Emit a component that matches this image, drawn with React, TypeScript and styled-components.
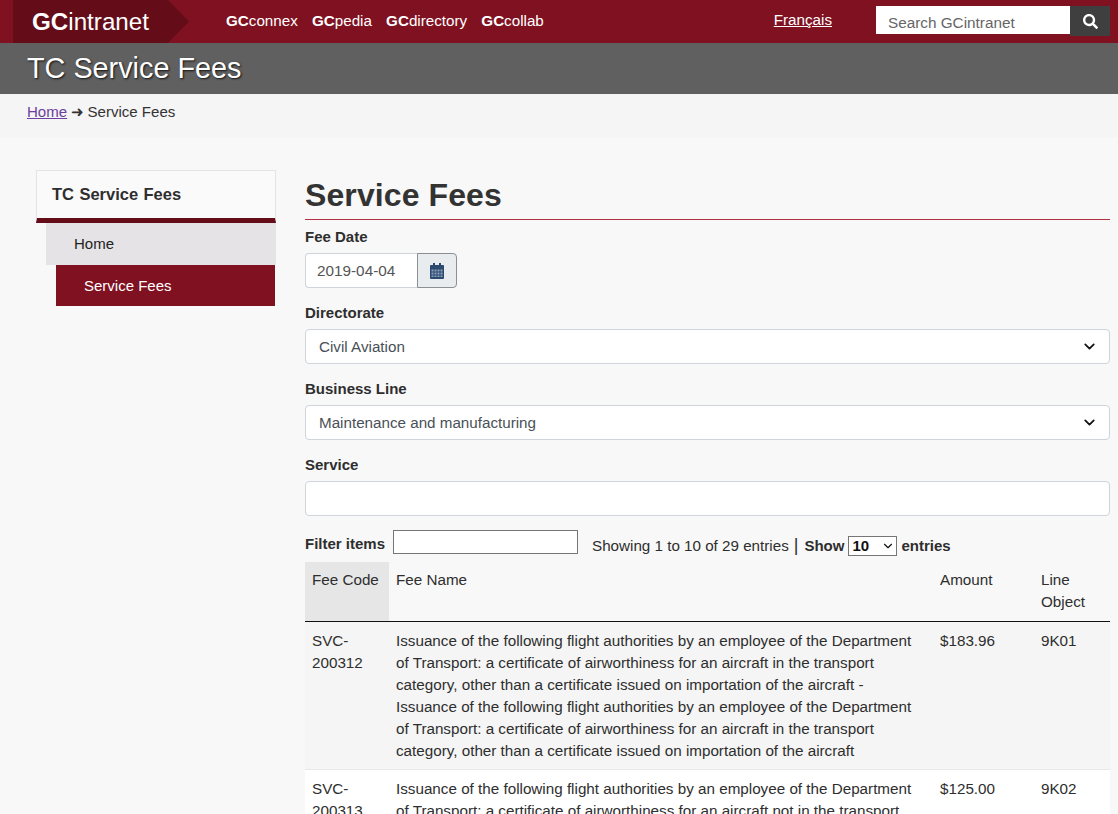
import React from "react";
import styled, { createGlobalStyle } from "styled-components";
import { ChevronDown } from "lucide-react";
import { FaSearch } from "react-icons/fa";

const Global = createGlobalStyle`
  html, body { margin: 0; padding: 0; height: 814px; overflow: hidden; background: #f8f8f8; }
  body { font-family: "Liberation Sans", Arial, sans-serif; font-size: 15px; line-height: 22px; color: #2e2e2e; }
  * { box-sizing: border-box; }
`;

const Page = styled.div`height: 814px; overflow: hidden;`;

const TopBar = styled.header`
  height: 43px; background: #7f1121; display: flex; align-items: flex-start; padding-left: 13px; position: relative;
`;
const Logo = styled.div`
  width: 176px; height: 43px; flex: none; background: #640d19; color: #fff; font-size: 24.2px; line-height: 44px; padding-left: 19px;
  clip-path: polygon(0 0, 155px 0, 176px 21.5px, 155px 43px, 0 43px);
  b { font-weight: 700; }
`;
const Nav = styled.nav`
  display: flex; gap: 14.2px; margin-left: 37px; padding-top: 10px; color: #fff; font-size: 15.2px; line-height: 22px;
  span b { font-weight: 700; }
`;
const Lang = styled.a`
  margin-left: auto; margin-right: 44px; margin-top: 9px; color: #fff; font-size: 15.2px; line-height: 22px; text-decoration: underline;
`;
const SearchWrap = styled.div`display: flex; margin: 6px 8px 0 0; height: 30px;`;
const SearchInput = styled.div`
  width: 194px; height: 28px; background: #fff; color: #666; font-size: 15.3px; line-height: 33px; padding-left: 12px; overflow: hidden;
`;
const SearchBtn = styled.div`
  width: 40px; height: 30px; background: #3f3f3f; display: flex; align-items: center; justify-content: center; color: #fff;
`;

const TitleBar = styled.div`
  height: 51px; background: #606060; color: #fff; padding-left: 27px; font-size: 28.8px; line-height: 50px; text-shadow: 1px 1px 2px #111;
`;
const Crumbs = styled.div`
  height: 44px; background: #f5f5f5; padding: 7px 0 0 27px; font-size: 15.05px; line-height: 22px; color: #333;
  a { color: #6b3fa0; text-decoration: underline; }
`;
const CrumbArrow = styled.span`margin-right: -1px;`;

const Body = styled.div`display: flex; padding: 32px 8px 0 36px; align-items: flex-start;`;
const Side = styled.aside`width: 240px; flex: none; margin-right: 29px;`;
const SideTitle = styled.div`
  height: 53px; background: #fafafa; border: 1px solid #e4e4e4; border-bottom: 5px solid #640d19;
  font-weight: 700; font-size: 16.5px; line-height: 47px; padding-left: 15px; word-spacing: 0.8px;
`;
const SideItem = styled.div<{ $level: number; $active?: boolean }>`
  margin-left: ${(p) => p.$level * 10}px; margin-right: ${(p) => (p.$active ? 1 : 0)}px;
  height: ${(p) => (p.$active ? 41 : 42)}px;
  background: ${(p) => (p.$active ? "#7f1121" : "#e5e3e5")};
  color: ${(p) => (p.$active ? "#fff" : "#222")};
  padding-left: 28px; line-height: 41px; font-size: 15px;
`;

const Main = styled.main`flex: 1; min-width: 0;`;
const HeadingBlock = styled.div`margin-bottom: 6px;`;
const Heading = styled.h1`
  margin: 0; height: 49px; font-size: 32px; line-height: 50px; font-weight: 700; color: #333; letter-spacing: 0.1px;
`;
const HeadingRule = styled.div`height: 1px; background: #b03045;`;
const Field = styled.div`margin-bottom: 14px;`;
const Label = styled.div`font-weight: 700; font-size: 15px; line-height: 22px; margin-bottom: 5px;`;
const DateGroup = styled.div`display: flex; height: 35px; width: 152px;`;
const DateInput = styled.div`
  flex: 1; border: 1px solid #ced4da; border-right: 0; border-radius: 4px 0 0 4px; background: #fff; color: #555; padding-left: 11px; line-height: 33px; font-size: 15.3px;
`;
const DateBtn = styled.div`
  width: 40px; border: 1px solid #8a8f94; border-radius: 0 4px 4px 0; background: #e9ecef; display: flex; align-items: center; justify-content: center;
`;
const Select = styled.div`
  height: 35px; background: #fff; border: 1px solid #ced4da; border-radius: 4px; color: #495057; padding: 0 11px 0 13px; line-height: 33px; font-size: 15.2px;
  display: flex; align-items: center; justify-content: space-between; svg { color: #111; }
`;
const FilterRow = styled.div`display: flex; align-items: flex-start; height: 32px; font-size: 15.2px;`;
const FilterLabel = styled.b`margin: 3px 8px 0 0; line-height: 22px; font-size: 15px;`;
const FilterInput = styled.div`width: 185px; height: 24px; background: #fff; border: 1px solid #767676;`;
const Info = styled.div`margin: 5px 0 0 14px; display: flex; line-height: 22px; white-space: nowrap; align-items: flex-start;`;
const Sep = styled.span`font-size: 18px; line-height: 21px; margin: 0 6px 0 5px;`;
const InfoBold = styled.b`font-size: 15px;`;
const PageSize = styled.div`
  width: 49px; height: 20px; margin: 1px 4px 0; background: #fff; border: 1px solid #767676; display: flex; align-items: center; justify-content: space-between;
  font-weight: 700; padding: 0 1px 0 3px; font-size: 15px; color: #111;
`;

const Table = styled.table`
  width: 805px; border-collapse: collapse; table-layout: fixed; font-size: 15.22px; line-height: 22px;
`;
const Th = styled.th<{ $sorted?: boolean; $w: number }>`
  width: ${(p) => p.$w}px; font-weight: 400; text-align: left; vertical-align: top; padding: 7px 7px 8px; height: 59px;
  background: ${(p) => (p.$sorted ? "#e6e6e6" : "#f8f8f8")}; border-bottom: 1px solid #111;
`;
const Row = styled.tr<{ $odd?: boolean }>`background: ${(p) => (p.$odd ? "#f5f5f5" : "#fff")};`;
const Td = styled.td`padding: 8px 7px 7px; vertical-align: top; border-bottom: 1px solid #e8e8e8;`;

const NAME1 =
  "Issuance of the following flight authorities by an employee of the Department of Transport: a certificate of airworthiness for an aircraft in the transport category, other than a certificate issued on importation of the aircraft - Issuance of the following flight authorities by an employee of the Department of Transport: a certificate of airworthiness for an aircraft in the transport category, other than a certificate issued on importation of the aircraft";
const NAME2 =
  "Issuance of the following flight authorities by an employee of the Department of Transport: a certificate of airworthiness for an aircraft not in the transport category, other than a certificate issued on importation of the aircraft";

const rows = [
  { code: "SVC-200312", name: NAME1, amount: "$183.96", line: "9K01" },
  { code: "SVC-200313", name: NAME2, amount: "$125.00", line: "9K02" },
];

const CalendarIcon = () => (
  <svg width="14" height="16" viewBox="0 0 14 16" aria-hidden="true">
    <path fill="#2c4a70" d="M3 0h2v2h4V0h2v2h2a1 1 0 0 1 1 1v12a1 1 0 0 1-1 1H1a1 1 0 0 1-1-1V3a1 1 0 0 1 1-1h2z" />
    <path fill="#8ea2bb" d="M1.5 6.5h2v2h-2zm3 0h2v2h-2zm3 0h2v2h-2zm3 0h2v2h-2zm-9 3h2v2h-2zm3 0h2v2h-2zm3 0h2v2h-2zm3 0h2v2h-2zm-9 3h2v1.5h-2zm3 0h2v1.5h-2zm3 0h2v1.5h-2zm3 0h2v1.5h-2z" />
  </svg>
);

export default function App() {
  return (
    <Page>
      <Global />
      <TopBar>
        <Logo><b>GC</b>intranet</Logo>
        <Nav>
          <span><b>GC</b>connex</span>
          <span><b>GC</b>pedia</span>
          <span><b>GC</b>directory</span>
          <span><b>GC</b>collab</span>
        </Nav>
        <Lang>Français</Lang>
        <SearchWrap>
          <SearchInput>Search GCintranet</SearchInput>
          <SearchBtn><FaSearch size={15} /></SearchBtn>
        </SearchWrap>
      </TopBar>
      <TitleBar>TC Service Fees</TitleBar>
      <Crumbs><a>Home</a> <CrumbArrow>➜</CrumbArrow> Service Fees</Crumbs>
      <Body>
        <Side>
          <SideTitle>TC Service Fees</SideTitle>
          <SideItem $level={1}>Home</SideItem>
          <SideItem $level={2} $active>Service Fees</SideItem>
        </Side>
        <Main>
          <HeadingBlock>
            <Heading>Service Fees</Heading>
            <HeadingRule />
          </HeadingBlock>
          <Field>
            <Label>Fee Date</Label>
            <DateGroup>
              <DateInput>2019-04-04</DateInput>
              <DateBtn><CalendarIcon /></DateBtn>
            </DateGroup>
          </Field>
          <Field>
            <Label>Directorate</Label>
            <Select>Civil Aviation<ChevronDown size={17} strokeWidth={2.5} /></Select>
          </Field>
          <Field>
            <Label>Business Line</Label>
            <Select>Maintenance and manufacturing<ChevronDown size={17} strokeWidth={2.5} /></Select>
          </Field>
          <Field>
            <Label>Service</Label>
            <Select />
          </Field>
          <FilterRow>
            <FilterLabel>Filter items</FilterLabel>
            <FilterInput />
            <Info>
              Showing 1 to 10 of 29 entries<Sep>|</Sep><InfoBold>Show</InfoBold>
              <PageSize>10<ChevronDown size={14} strokeWidth={2} /></PageSize>
              <InfoBold>entries</InfoBold>
            </Info>
          </FilterRow>
          <Table>
            <thead>
              <tr>
                <Th $w={84} $sorted>Fee Code</Th>
                <Th $w={544}>Fee Name</Th>
                <Th $w={101}>Amount</Th>
                <Th $w={76}>Line Object</Th>
              </tr>
            </thead>
            <tbody>
              {rows.map((r, i) => (
                <Row key={r.code} $odd={i % 2 === 0}>
                  <Td>{r.code}</Td>
                  <Td>{r.name}</Td>
                  <Td>{r.amount}</Td>
                  <Td>{r.line}</Td>
                </Row>
              ))}
            </tbody>
          </Table>
        </Main>
      </Body>
    </Page>
  );
}
